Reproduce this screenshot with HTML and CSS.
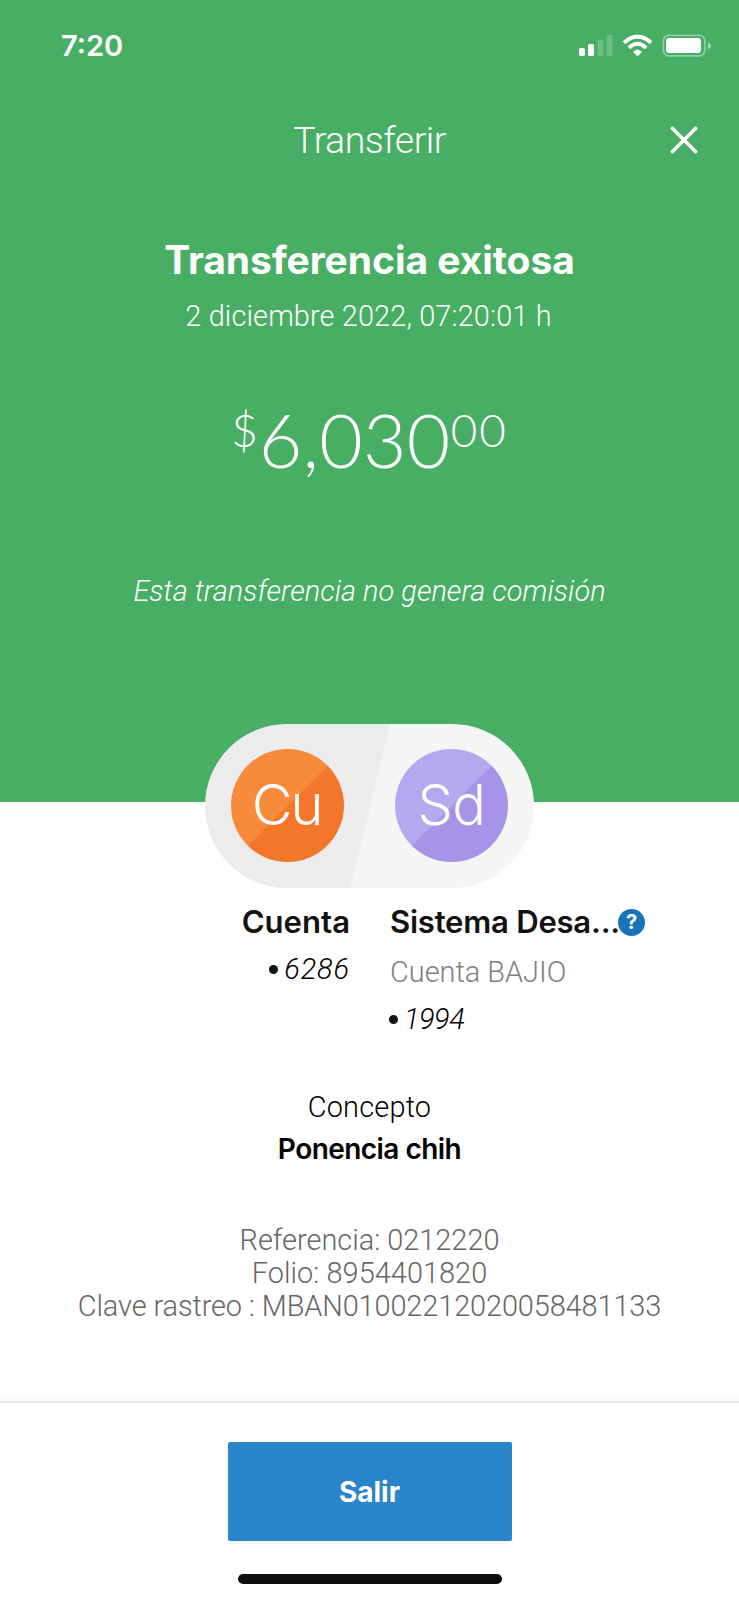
FILE: index.html
```html
<!DOCTYPE html>
<html lang="es">
<head>
<meta charset="utf-8">
<title>Transferir</title>
<link rel="stylesheet" href="styles.css">
</head>
<body>
<div class="screen">
  <header class="hero">
    <div class="status">
      <span class="time">7:20</span>
      <svg class="status-icons" width="133" height="24" viewBox="0 0 133 24">
        <g fill="#fff">
          <rect x="0" y="14" width="6" height="8" rx="1.6"/>
          <rect x="9" y="10" width="6" height="12" rx="1.6"/>
          <g opacity=".2">
            <rect x="18.5" y="6" width="6" height="16" rx="1.6"/>
            <rect x="27.5" y="1" width="6" height="21" rx="1.6"/>
          </g>
          <path d="M58.5 22 L54.6 17.8 Q58.5 14.4 62.4 17.8 Z" stroke="#fff" stroke-width="1" stroke-linejoin="round"/>
          <rect x="87" y="4" width="35" height="15" rx="3"/>
          <path opacity=".5" d="M129 8 Q131.8 9.3 131.8 11.7 Q131.8 14 129 15.5 Z"/>
        </g>
        <g fill="none" stroke="#fff">
          <path stroke-width="4" d="M45 8.7 Q58.5 -3.5 72 8.7"/>
          <path stroke-width="3.8" d="M49.9 13.9 Q58.5 5.8 67.1 13.9"/>
          <rect opacity=".4" stroke-width="1.7" x="84.3" y="1.3" width="41.5" height="20.5" rx="5.5"/>
        </g>
      </svg>
    </div>
    <div class="navbar">
      <h1 class="nav-title">Transferir</h1>
      <svg class="close" width="28" height="28" viewBox="0 0 28 28"><path d="M1.2 1.2 L26.8 26.8 M26.8 1.2 L1.2 26.8" stroke="#fff" stroke-width="3.4"/></svg>
    </div>
    <h2 class="title">Transferencia exitosa</h2>
    <p class="date">2 diciembre 2022, 07:20:01 h</p>
    <p class="amount"><span class="currency">$</span><span class="units">6,030</span><span class="cents">00</span></p>
    <p class="note">Esta transferencia no genera comisión</p>
  </header>
  <div class="pill">
    <div class="avatar avatar-origin">Cu</div>
    <div class="avatar avatar-target">Sd</div>
  </div>
  <section class="parties">
    <div class="party party-origin">
      <div class="name">Cuenta</div>
      <div class="number"><i class="dot"></i><span class="n-origin">6286</span></div>
    </div>
    <div class="party party-target">
      <div class="name name-target">Sistema Desa...<span class="help">?</span></div>
      <div class="bank">Cuenta BAJIO</div>
      <div class="number"><i class="dot"></i><span class="n-target">1994</span></div>
    </div>
  </section>
  <section class="concept">
    <div class="concept-label">Concepto</div>
    <div class="concept-value">Ponencia chih</div>
  </section>
  <section class="refs">
    <div>Referencia: 0212220</div>
    <div class="folio">Folio: 8954401820</div>
    <div class="tracking">Clave rastreo : MBAN01002212020058481133</div>
  </section>
  <footer class="footer">
    <button class="exit">Salir</button>
    <div class="home-bar"></div>
  </footer>
</div>
</body>
</html>
```
FILE: styles.css
```css
* { box-sizing: border-box; margin: 0; padding: 0; }
body { background: #fff; }
.screen {
  width: 739px; height: 1600px; overflow: hidden;
  display: flex; flex-direction: column;
  font-family: Roboto, "Liberation Sans", sans-serif; font-weight: 300; font-size: 28.9px;
  line-height: 36px; white-space: nowrap; color: #121212;
}
.hero { height: 802px; background: #48ae64; color: #fff; text-align: center; flex: none; }
.status { display: flex; justify-content: space-between; padding: 26px 27px 0 61px; height: 116px; }
.time { font: 600 29px/40px Inter, sans-serif; }
.status-icons { margin-top: 8px; }
.navbar { display: grid; grid-template-columns: 1fr 160px 1fr; height: 48px; }
.nav-title { grid-column: 2; justify-self: center; font-size: 37.5px; font-weight: 300; line-height: 48px; letter-spacing: -.5px; }
.close { justify-self: end; margin: 10px 41px 0 0; }
.title { font: 700 39px/48px Inter, sans-serif; margin-top: 72px; letter-spacing: -.05px; }
.date { margin-top: 14px; letter-spacing: .12px; margin-right: 2px; }
.amount { display: flex; justify-content: center; height: 90px; margin-top: 60px; font-family: Lato, sans-serif; line-height: 90px; }
.currency, .cents { font-size: 45.8px; line-height: 56px; padding-top: 7.8px; }
.units { font-size: 75px; letter-spacing: .3px; padding-left: 1px; }
.cents { letter-spacing: 2px; }
.note { margin-top: 89px; font-style: italic; letter-spacing: .04px; }
.pill {
  flex: none; width: 329px; height: 164px; border-radius: 82px; margin: -78.5px auto 0;
  display: flex; gap: 51.5px; padding: 25.5px;
  background: linear-gradient(103.7deg, #ececec 50%, #f5f5f5 50.3%);
  position: relative;
}
.avatar { width: 113px; height: 113px; border-radius: 50%; color: #fff; font: 300 56px/112px Inter, sans-serif; text-align: center; }
.avatar-origin { background: linear-gradient(135deg, #f78b3b 50%, #f4762b 50.5%); letter-spacing: -2px; padding-right: 1px; }
.avatar-target { background: linear-gradient(135deg, #b6a8ee 50%, #a594e8 50.5%); letter-spacing: -.5px; }
.parties { display: grid; grid-template-columns: 350px 1fr; column-gap: 40px; margin-top: 14.5px; height: 187px; flex: none; }
.party { display: flex; flex-direction: column; }
.party-origin { align-items: flex-end; }
.party-origin .number { margin-top: 9px; }
.party-target .number { margin-top: 11px; }
.name { font: 600 31.1px/40px Inter, sans-serif; }
.name-target { display: flex; align-items: center; letter-spacing: -.25px; }
.help {
  width: 27px; height: 27px; border-radius: 50%; background: #1973b8; color: #fff;
  font: 700 20px/27px Inter, sans-serif; text-align: center; margin-top: 1px; margin-left: -2px;
}
.bank { margin-top: 12px; color: #808080; }
.number { display: flex; align-items: center; font-style: italic; color: #000; }
.dot { width: 9px; height: 9px; border-radius: 50%; background: #121212; margin-left: -1px; }
.n-origin { margin-left: 6px; letter-spacing: .9px; }
.n-target { margin-left: 6px; letter-spacing: -.5px; }
.concept { text-align: center; color: #000; height: 134px; flex: none; }
.concept-label { letter-spacing: .2px; }
.concept-value { font: 600 28px/36px Inter, sans-serif; margin-top: 6px; letter-spacing: -.55px; }
.refs { text-align: center; line-height: 33px; color: #666; flex: none; height: 177.5px; padding-top: 1px; }
.folio { letter-spacing: .05px; }
.tracking { letter-spacing: -.1px; }
.footer {
  flex: 1; border-top: 2px solid #e9e9e9; box-shadow: 0 -3px 6px rgba(0,0,0,.03);
  display: flex; flex-direction: column; align-items: center; padding-top: 39px;
}
.exit {
  width: 284px; height: 99px; border: 0; border-radius: 2px; background: #2a86ca; color: #fff;
  font: 700 28px/99px Inter, sans-serif; padding-top: 1px;
}
.home-bar { width: 264px; height: 10px; border-radius: 5px; background: #0d0d0d; margin-top: 33px; }
```
